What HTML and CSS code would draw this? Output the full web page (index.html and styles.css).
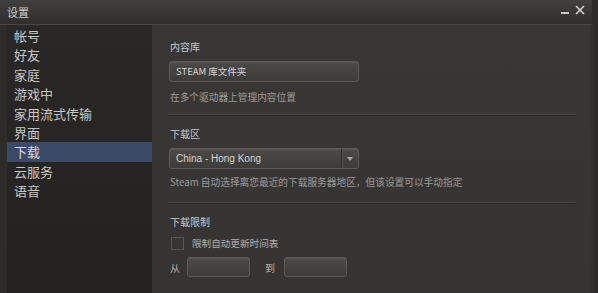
FILE: index.html
```html
<!DOCTYPE html>
<html lang="zh">
<head>
    <meta charset="UTF-8">
    <title>设置</title>
    <link rel="stylesheet" href="styles.css">
</head>
<body>
    <div class="window">
        <!-- Title bar -->
        <div class="titlebar">
            <span class="title">设置</span>
            <div class="controls">
                <svg class="ctl-min" width="9" height="9" viewBox="0 0 9 9"><rect x="0" y="6" width="8" height="2" fill="#c9c7c5"/></svg>
                <svg class="ctl-close" width="10" height="10" viewBox="0 0 10 10"><path d="M1 1 L9 9 M9 1 L1 9" stroke="#d4d2d0" stroke-width="1.6"/></svg>
            </div>
        </div>

        <div class="main">
            <!-- Sidebar -->
            <ul class="sidebar">
                <li>帐号</li>
                <li>好友</li>
                <li>家庭</li>
                <li>游戏中</li>
                <li>家用流式传输</li>
                <li>界面</li>
                <li class="active">下载</li>
                <li>云服务</li>
                <li>语音</li>
            </ul>

            <!-- Content -->
            <div class="content">
                <div class="section first">
                    <div class="label">内容库</div>
                    <div class="field wide">STEAM 库文件夹</div>
                    <div class="desc">在多个驱动器上管理内容位置</div>
                </div>
                <div class="sep"></div>

                <div class="section">
                    <div class="label">下载区</div>
                    <div class="field wide select">
                        <span>China - Hong Kong</span>
                        <span class="arrow"></span>
                    </div>
                    <div class="desc desc-tight">Steam 自动选择离您最近的下载服务器地区，但该设置可以手动指定</div>
                </div>
                <div class="sep sep-low"></div>

                <div class="section">
                    <div class="label">下载限制</div>
                    <div class="check-row">
                        <span class="checkbox"></span>
                        <span class="check-label">限制自动更新时间表</span>
                    </div>
                    <div class="time-row">
                        <span class="time-label">从</span>
                        <div class="field small"></div>
                        <span class="time-label to">到</span>
                        <div class="field small"></div>
                    </div>
                </div>
            </div>
            <div class="edge"></div>
        </div>
    </div>
</body>
</html>
```

FILE: styles.css
```css
/* Base */
body, html {
    margin: 0;
    padding: 0;
    background: #2d2b29;
    font-family: 'Noto Sans CJK SC', 'DejaVu Sans', sans-serif;
    color: #c6c4c2;
}
.window {
    width: 598px;
    height: 293px;
    overflow: hidden;
    display: flex;
    flex-direction: column;
    background: #2e2c2a;
}
/* Title bar */
.titlebar {
    height: 24px;
    flex: none;
    display: flex;
    align-items: center;
    justify-content: space-between;
    padding: 0 7px 0 7px;
    background: linear-gradient(#42403e, #302e2c);
    border-bottom: 1px solid #4a4846;
    margin-right: 6px;
}
.title {
    font-size: 11px;
    color: #cfcdcb;
    line-height: 14px;
}
.controls {
    display: flex;
    align-items: center;
    gap: 5px;
    margin-top: -4px;
}
/* Main area */
.main {
    flex: 1;
    display: flex;
    padding-left: 7px;
}
.sidebar {
    list-style: none;
    margin: 0;
    padding: 1px 0 0 0;
    width: 145px;
    background: linear-gradient(#292827, #232221);
    flex: none;
}
.sidebar li {
    height: 19.4px;
    line-height: 19.4px;
    font-size: 13px;
    padding-left: 7px;
    color: #c8c6c4;
}
.sidebar li.active {
    background: #3b4a67;
    color: #d8d8dc;
}
.content {
    flex: 1;
    background: linear-gradient(#393735, #363432);
    padding-left: 17px;
    padding-right: 15px;
}
.edge {
    width: 8px;
    background: linear-gradient(90deg, #343230, #2a2928);
}
/* Sections */
.section.first {
    padding-top: 15px;
}
.label {
    font-size: 10px;
    line-height: 14px;
    color: #c9c7c5;
    padding-left: 1px;
}
.section .label {
    margin-top: 11px;
}
.section.first .label {
    margin-top: 0;
}
.field {
    box-sizing: border-box;
    height: 21px;
    border: 1px solid #5c5a58;
    border-radius: 3px;
    background: linear-gradient(#4c4a48, #3e3c3a);
    box-shadow: inset 0 1px 0 #5a5856;
    font-size: 9.5px;
    line-height: 19px;
    padding-left: 6px;
    color: #d4d2d0;
}
.field.wide {
    width: 190px;
    margin-top: 7px;
}
.select {
    display: flex;
    justify-content: space-between;
    margin-top: 8px;
    font-size: 10px;
    font-family: 'Liberation Sans', 'Noto Sans CJK SC', sans-serif;
}
.arrow {
    width: 16px;
    border-left: 1px solid #2e2c2a;
    box-shadow: inset 1px 0 0 #555351;
    position: relative;
}
.arrow::after {
    content: '';
    position: absolute;
    left: 5px;
    top: 8px;
    border-left: 3px solid transparent;
    border-right: 3px solid transparent;
    border-top: 4px solid #a8a6a4;
}
.desc {
    font-size: 9.7px;
    line-height: 14px;
    color: #9c9a98;
    margin-top: 8px;
    padding-left: 1px;
}
.desc-tight {
    margin-top: 6px;
}
.sep {
    height: 1px;
    margin: 10px 0 0 -1px;
    background: #4a4846;
    border-bottom: 1px solid #2c2a28;
}
.sep-low {
    margin-top: 13px;
}
/* Download limits */
.check-row {
    display: flex;
    align-items: center;
    height: 14px;
    margin-top: 7px;
}
.checkbox {
    box-sizing: border-box;
    width: 13px;
    height: 13px;
    margin-left: 2px;
    border: 1px solid #575553;
    background: #383634;
}
.check-label {
    font-size: 9.6px;
    color: #b2b0ae;
    margin-left: 8px;
}
.time-row {
    display: flex;
    align-items: center;
    margin-top: 7px;
}
.time-label {
    font-size: 10px;
    color: #b2b0ae;
    width: 17px;
    padding-left: 1px;
}
.time-label.to {
    width: 19px;
    margin-left: 14px;
}
.field.small {
    width: 63px;
    height: 20px;
    padding: 0;
}
```
